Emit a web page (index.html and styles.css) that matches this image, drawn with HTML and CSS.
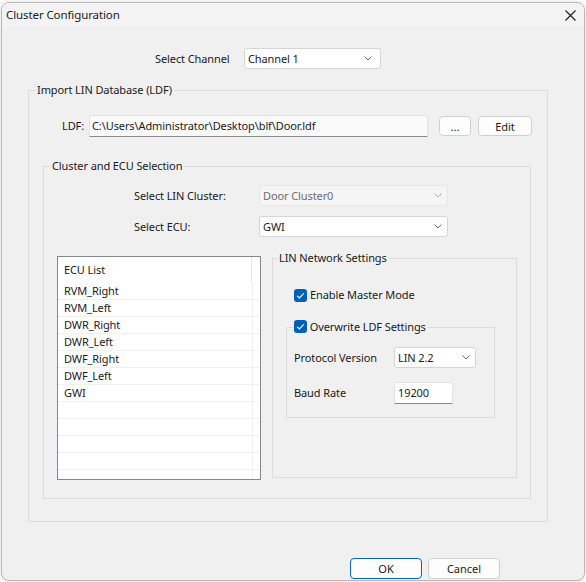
FILE: index.html
```html
<html>
    <head>
        <meta charset="UTF-8">
        <title>Cluster Configuration</title>
        <link rel="stylesheet" href="styles.css">
    </head>
    <body>
        <div class="window">
            <div class="titlebar">
                <span class="title">Cluster Configuration</span>
                <span class="close">
                    <svg width="11" height="11" viewBox="0 0 11 11"><path d="M0.5 0.5 L10.5 10.5 M10.5 0.5 L0.5 10.5" stroke="#1b1b1b" stroke-width="1.1" fill="none"/></svg>
                </span>
            </div>

            <div class="content">
                <div class="channel-row">
                    <span class="channel-label">Select Channel</span>
                    <div class="combo channel-combo">
                        <span>Channel 1</span>
                        <svg class="chevron" width="8" height="5" viewBox="0 0 8 5"><path d="M0.5 0.5 L4 4 L7.5 0.5" stroke="#6b6b6b" fill="none"/></svg>
                    </div>
                </div>

                <fieldset class="group import-group">
                    <legend>Import LIN Database (LDF)</legend>
                    <div class="ldf-row">
                        <span class="ldf-label">LDF:</span>
                        <div class="textbox ldf-path">C:\Users\Administrator\Desktop\blf\Door.ldf</div>
                        <button class="btn browse-btn">...</button>
                        <button class="btn edit-btn">Edit</button>
                    </div>

                    <fieldset class="group cluster-group">
                        <legend>Cluster and ECU Selection</legend>
                        <div class="select-grid">
                            <span>Select LIN Cluster:</span>
                            <div class="combo wide-combo disabled">
                                <span>Door Cluster0</span>
                                <svg class="chevron" width="8" height="5" viewBox="0 0 8 5"><path d="M0.5 0.5 L4 4 L7.5 0.5" stroke="#b5b5b5" fill="none"/></svg>
                            </div>
                            <span>Select ECU:</span>
                            <div class="combo wide-combo">
                                <span>GWI</span>
                                <svg class="chevron" width="8" height="5" viewBox="0 0 8 5"><path d="M0.5 0.5 L4 4 L7.5 0.5" stroke="#6b6b6b" fill="none"/></svg>
                            </div>
                        </div>

                        <div class="bottom-row">
                            <div class="ecu-list">
                                <div class="list-header"><span class="header-cell">ECU List</span></div>
                                <div class="list-row"><span class="cell">RVM_Right</span></div>
                                <div class="list-row"><span class="cell">RVM_Left</span></div>
                                <div class="list-row"><span class="cell">DWR_Right</span></div>
                                <div class="list-row"><span class="cell">DWR_Left</span></div>
                                <div class="list-row"><span class="cell">DWF_Right</span></div>
                                <div class="list-row"><span class="cell">DWF_Left</span></div>
                                <div class="list-row"><span class="cell">GWI</span></div>
                                <div class="list-row"><span class="cell"></span></div>
                                <div class="list-row"><span class="cell"></span></div>
                                <div class="list-row"><span class="cell"></span></div>
                                <div class="list-row"><span class="cell"></span></div>
                                <div class="list-row"><span class="cell"></span></div>
                            </div>

                            <fieldset class="group network-group">
                                <legend>LIN Network Settings</legend>
                                <label class="check-row">
                                    <span class="checkbox"><svg width="13" height="13" viewBox="0 0 13 13"><path d="M3.2 6.8 L5.4 9 L9.8 4.4" stroke="#fff" stroke-width="1.1" fill="none"/></svg></span>
                                    Enable Master Mode
                                </label>

                                <fieldset class="group overwrite-group">
                                    <legend>
                                        <span class="checkbox"><svg width="13" height="13" viewBox="0 0 13 13"><path d="M3.2 6.8 L5.4 9 L9.8 4.4" stroke="#fff" stroke-width="1.1" fill="none"/></svg></span>
                                        Overwrite LDF Settings
                                    </legend>
                                    <div class="settings-grid">
                                        <span>Protocol Version</span>
                                        <div class="combo protocol-combo">
                                            <span>LIN 2.2</span>
                                            <svg class="chevron" width="8" height="5" viewBox="0 0 8 5"><path d="M0.5 0.5 L4 4 L7.5 0.5" stroke="#6b6b6b" fill="none"/></svg>
                                        </div>
                                        <span>Baud Rate</span>
                                        <div class="textbox baud-box">19200</div>
                                    </div>
                                </fieldset>
                            </fieldset>
                        </div>
                    </fieldset>
                </fieldset>

                <div class="dialog-buttons">
                    <button class="btn dialog-btn default">OK</button>
                    <button class="btn dialog-btn">Cancel</button>
                </div>
            </div>
        </div>
    </body>
</html>
```

FILE: styles.css
```css
body {
    margin: 0;
    background: #ffffff;
    font-family: 'Segoe UI', 'Noto Sans', sans-serif;
    font-size: 11px;
    line-height: 16px;
    letter-spacing: -0.1px;
    color: #1a1a1a;
}

.window {
    box-sizing: border-box;
    width: 584px;
    height: 579px;
    margin: 2px 0 0 1px;
    border: 1px solid #b9b9b9;
    border-radius: 8px;
    background: #f0f0f0;
    overflow: hidden;
    box-shadow: 0 0 4px rgba(0,0,0,0.15);
}

.titlebar {
    display: flex;
    justify-content: space-between;
    align-items: center;
    height: 24px;
    padding-left: 4px;
    background: #f3f3f3;
}

.title {
    font-size: 11.5px;
}

.close {
    display: flex;
    width: 28px;
    justify-content: center;
}

/* channel selector */

.channel-row {
    display: flex;
    align-items: center;
    margin-top: 21px;
    padding-left: 153px;
}

.channel-label {
    width: 89px;
}

.combo {
    box-sizing: border-box;
    display: flex;
    align-items: center;
    justify-content: space-between;
    height: 21px;
    padding: 0 5px 0 3px;
    background: #ffffff;
    border: 1px solid #d5d5d5;
    border-radius: 3px;
}

.combo.disabled {
    background: #f5f5f5;
    border-color: #e6e6e6;
    color: #6d6d6d;
}

.channel-combo {
    width: 137px;
    padding-right: 8px;
}

.wide-combo {
    width: 189px;
}

.protocol-combo {
    width: 82px;
}

.textbox {
    box-sizing: border-box;
    height: 22px;
    line-height: 20px;
    border: 1px solid #e3e3e3;
    border-bottom-color: #8a8a8a;
    border-radius: 3px 3px 0 0;
}

/* group boxes */

.group {
    box-sizing: border-box;
    min-width: 0;
    margin: 0;
    padding: 0;
    border: 1px solid #dcdcdc;
}

.group legend {
    margin-left: 6px;
    padding: 0 2px;
    line-height: 16px;
}

.import-group {
    width: 520px;
    margin: 13px 0 0 26px;
}

.ldf-row {
    display: flex;
    align-items: center;
    margin-top: 17px;
    padding-left: 33px;
}

.ldf-label {
    width: 27px;
}

.ldf-path {
    width: 339px;
    padding-left: 2px;
    background: #fafafa;
}

.btn {
    box-sizing: border-box;
    height: 20px;
    padding: 0;
    font-family: inherit;
    font-size: 11px;
    color: #1a1a1a;
    background: #fdfdfd;
    border: 1px solid #d0d0d0;
    border-radius: 4px;
}

.browse-btn {
    width: 32px;
    margin-left: 11px;
}

.edit-btn {
    width: 54px;
    margin-left: 7px;
}

.cluster-group {
    width: 488px;
    margin: 21px 0 22px 14px;
    padding-bottom: 18px;
}

.select-grid {
    display: grid;
    grid-template-columns: 125px 189px;
    row-gap: 10px;
    align-items: center;
    margin-top: 11px;
    padding-left: 90px;
}

.bottom-row {
    display: flex;
    align-items: flex-start;
    margin-top: 13px;
}

/* ECU list view */

.ecu-list {
    box-sizing: border-box;
    width: 204px;
    height: 224px;
    margin: 6px 0 0 13px;
    background: #ffffff;
    border: 1px solid #828790;
    overflow: hidden;
}

.list-header {
    display: flex;
    height: 26px;
}

.header-cell {
    width: 194px;
    padding-left: 6px;
    line-height: 26px;
    border-right: 1px solid #e5e5e5;
    box-sizing: border-box;
}

.list-row {
    display: flex;
    height: 17px;
    border-bottom: 1px solid #f0f0f0;
    box-sizing: border-box;
}

.cell {
    box-sizing: border-box;
    width: 195px;
    padding-left: 6px;
    border-right: 1px solid #f0f0f0;
}

/* LIN network settings */

.network-group {
    width: 245px;
    height: 228px;
    margin-left: 11px;
}

.network-group > legend {
    margin-left: 4px;
}

.check-row {
    display: flex;
    align-items: center;
    gap: 3px;
    margin: 21px 0 0 21px;
}

.checkbox {
    display: inline-block;
    width: 13px;
    height: 13px;
    background: #005fb8;
    border-radius: 3px;
    vertical-align: -2px;
}

.checkbox svg {
    display: block;
}

.overwrite-group {
    width: 209px;
    height: 99px;
    margin: 16px 0 0 13px;
}

.overwrite-group > legend {
    margin-left: 7px;
    padding: 0 2px 0 0;
}

.settings-grid {
    display: grid;
    grid-template-columns: 100px 82px;
    row-gap: 14px;
    align-items: center;
    margin-top: 12px;
    padding-left: 7px;
}

.baud-box {
    width: 59px;
    padding-left: 3px;
    background: #ffffff;
}

/* OK / Cancel */

.dialog-buttons {
    display: flex;
    gap: 6px;
    margin-top: 36px;
    padding-left: 348px;
}

.dialog-btn {
    width: 72px;
    height: 21px;
}

.dialog-btn.default {
    border-color: #0067c0;
}
```
